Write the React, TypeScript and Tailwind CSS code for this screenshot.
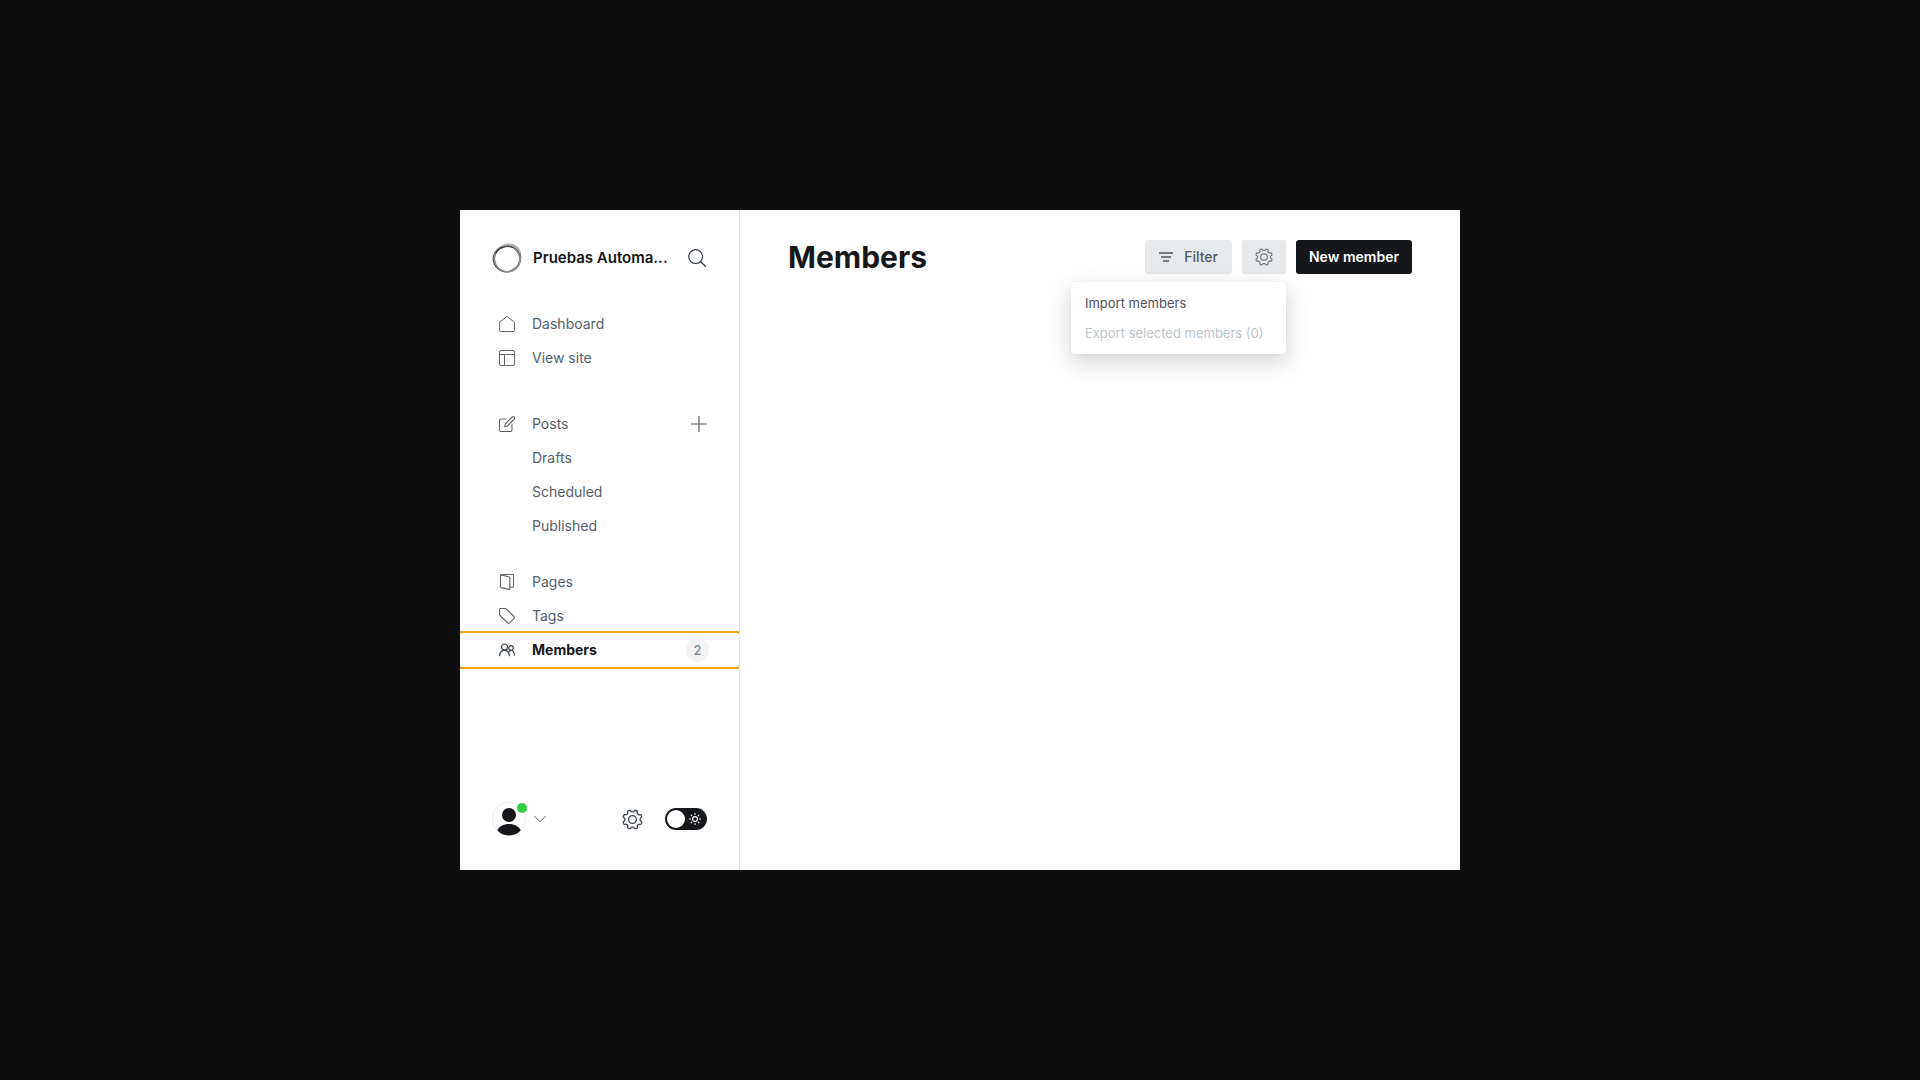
import type { ReactNode } from "react";

const stroke = {
  fill: "none",
  stroke: "currentColor",
  strokeLinecap: "round" as const,
  strokeLinejoin: "round" as const,
  "aria-hidden": true,
};

function HomeIcon() {
  return (
    <svg {...stroke} viewBox="0 0 16 16" className="size-4" strokeWidth="1">
      <path d="M.5 6.200 7.600.8a.7.7 0 0 1 .8 0l7.100 5.400v8.300a1 1 0 0 1-1 1h-13a1 1 0 0 1-1-1z" />
    </svg>
  );
}

function LayoutIcon() {
  return (
    <svg {...stroke} viewBox="0 0 16 16" className="size-4" strokeWidth="1">
      <rect x=".5" y=".5" width="15" height="15" rx="1.500" />
      <path d="M.5 4.500h15M5.500 4.500v11" />
    </svg>
  );
}

function ComposeIcon() {
  return (
    <svg {...stroke} viewBox="0 0 16 16" className="size-4" strokeWidth="1.100">
      <path d="M13 8.600v5.400a1.500 1.500 0 0 1-1.500 1.500H2A1.500 1.500 0 0 1 .5 14V4.500A1.500 1.500 0 0 1 2 3h5" />
      <path d="m8.300 10.100-2.600.6.600-2.700L13.200 1a1.400 1.400 0 0 1 2 2z" />
    </svg>
  );
}

function PagesIcon() {
  return (
    <svg {...stroke} viewBox="0 0 16 16" className="size-4" strokeWidth="1.100">
      <path d="M1.800.9 9.800 2.700a1.200 1.200 0 0 1 1 1.200v10.700a.8.8 0 0 1-1 .8L2.400 13.600a1.200 1.200 0 0 1-.9-1.200V1.500a1 1 0 0 1 1-1h11a1 1 0 0 1 1 1v10.800a1 1 0 0 1-1 1h-2.700" />
    </svg>
  );
}

function TagIcon() {
  return (
    <svg {...stroke} viewBox="0 0 16 16" className="size-4" strokeWidth="1.100">
      <path d="M.5 1.600A1.100 1.100 0 0 1 1.600.5h4.500a2 2 0 0 1 1.400.6l7.600 7.600a1.200 1.200 0 0 1 0 1.700l-4.700 4.700a1.200 1.200 0 0 1-1.700 0L1.100 7.500A2 2 0 0 1 .5 6.100z" />
    </svg>
  );
}

function MembersIcon() {
  return (
    <svg {...stroke} viewBox="0 0 16 16" className="size-4" strokeWidth="1.200">
      <circle cx="5.500" cy="5" r="3" />
      <circle cx="12" cy="6" r="2.300" />
      <path d="M.6 13.600C.8 10.500 2.600 8.300 5.500 8.300s4.600 2.200 4.900 5.300M10.200 9.300c.5-.5 1.100-.8 1.800-.8 2 0 3.200 1.800 3.400 4.600" />
    </svg>
  );
}

function SearchIcon() {
  return (
    <svg {...stroke} viewBox="0 0 18 18" className="size-[18px]" strokeWidth="1.200">
      <circle cx="7.600" cy="7.600" r="6.900" />
      <path d="m12.500 12.500 5 5" />
    </svg>
  );
}

function PlusIcon() {
  return (
    <svg {...stroke} viewBox="0 0 16 16" className="size-4" strokeWidth="1.200">
      <path d="M8 .2v15.600M.2 8h15.600" />
    </svg>
  );
}

const gearOutline = Array.from({ length: 160 }, (_, i) => {
  const angle = (i / 160) * Math.PI * 2;
  const radius = 9.9 - 1.35 * Math.tanh(1.6 * Math.cos(8 * angle));
  return `${(12 + radius * Math.cos(angle)).toFixed(2)},${(12 + radius * Math.sin(angle)).toFixed(2)}`;
}).join(" ");

function GearIcon({ className }: { className: string }) {
  return (
    <svg {...stroke} viewBox="0 0 24 24" className={className} strokeWidth="1.500">
      <circle cx="12" cy="12" r="4.400" />
      <polygon points={gearOutline} />
    </svg>
  );
}

function FilterIcon() {
  return (
    <svg {...stroke} viewBox="0 0 14 12" className="h-3 w-3.5" strokeWidth="1.500" strokeLinecap="butt">
      <path d="M0 2h14M2 6h10M4 10h6" />
    </svg>
  );
}

function ChevronIcon() {
  return (
    <svg {...stroke} viewBox="0 0 12 12" className="size-3" strokeWidth="1">
      <path d="m.7 3.400 5.300 5.300 5.300-5.300" />
    </svg>
  );
}

function SunIcon() {
  return (
    <svg {...stroke} viewBox="0 0 12 12" className="size-3" strokeWidth="1.100">
      <circle cx="6" cy="6" r="2.400" />
      <path d="M6 .5v1M6 10.500v1M.5 6h1M10.500 6h1M2.100 2.100l.7.7M9.200 9.200l.7.7M2.100 9.900l.7-.7M9.200 2.800l.7-.7" />
    </svg>
  );
}

function SiteLogo() {
  return (
    <svg viewBox="0 0 30 30" className="size-[30px] shrink-0" fill="none" aria-hidden="true">
      <ellipse cx="14.800" cy="15.800" rx="13.600" ry="13" stroke="#4c4f52" strokeWidth="1.300" />
      <ellipse cx="15.600" cy="15" rx="12.600" ry="14" stroke="#77797b" strokeWidth="1.200" transform="rotate(32 15.600 15)" />
      <ellipse cx="15" cy="15.800" rx="12.400" ry="13.200" stroke="#8b8d8f" strokeWidth="1.200" transform="rotate(-35 15 15.800)" />
      <path d="M10 3C17-.8 26.500 2 28.200 10" stroke="#b0b2b4" strokeWidth="1.500" />
      <path d="M28.300 13c.6 6-2.500 12-8.800 15" stroke="#8b8d8f" strokeWidth="2.200" />
      <path d="M3.500 10.500c3-6 11-8.500 18-6" stroke="#333537" strokeWidth="1.200" />
    </svg>
  );
}

function NavLink({ icon, label, active = false, badge }: { icon?: ReactNode; label: string; active?: boolean; badge?: string }) {
  return (
    <a
      href="#"
      aria-current={active ? "page" : undefined}
      className={
        active
          ? "flex h-[34px] flex-1 items-center gap-[17px] rounded-xs pr-[30px] pl-[39px] text-sm font-bold text-[#15171a] outline-2 outline-[#eda31c]"
          : "flex h-[34px] flex-1 items-center gap-[17px] pr-[30px] pl-[39px] text-sm text-[#54606b]"
      }
    >
      <span className={active ? "size-4 text-[#394047]" : "size-4 text-[#5d646b]"}>{icon}</span>
      <span className="flex-1">{label}</span>
      {badge && (
        <span className="flex h-6 min-w-[23px] items-center justify-center rounded-full bg-[#f1f3f4] px-1 text-[13px] font-medium text-[#7c8b9a]">
          {badge}
        </span>
      )}
    </a>
  );
}

function Sidebar() {
  return (
    <aside className="flex w-[280px] shrink-0 flex-col overflow-hidden border-r border-[#e1e4e7]">
      <div className="flex items-center pt-[33px] pr-[33px] pl-8">
        <SiteLogo />
        <span className="ml-[11px] text-[15px] font-semibold whitespace-nowrap text-[#15171a]">Pruebas Automa...</span>
        <button type="button" aria-label="Search site" className="ml-auto text-[#394047]">
          <SearchIcon />
        </button>
      </div>

      <nav className="mt-[34px]">
        <ul>
          <li className="flex"><NavLink icon={<HomeIcon />} label="Dashboard" /></li>
          <li className="flex"><NavLink icon={<LayoutIcon />} label="View site" /></li>
        </ul>
        <ul className="mt-8">
          <li className="flex items-center pr-8">
            <NavLink icon={<ComposeIcon />} label="Posts" />
            <button type="button" aria-label="New post" className="text-[#54595f]">
              <PlusIcon />
            </button>
          </li>
          <li className="flex"><NavLink label="Drafts" /></li>
          <li className="flex"><NavLink label="Scheduled" /></li>
          <li className="flex"><NavLink label="Published" /></li>
        </ul>
        <ul className="mt-[22px]">
          <li className="flex"><NavLink icon={<PagesIcon />} label="Pages" /></li>
          <li className="flex"><NavLink icon={<TagIcon />} label="Tags" /></li>
          <li className="flex"><NavLink icon={<MembersIcon />} label="Members" active badge="2" /></li>
        </ul>
      </nav>

      <div className="mt-auto flex items-center pr-8 pb-[34px] pl-8">
        <button type="button" aria-label="Account menu" className="flex items-center gap-2 text-[#54595f]">
          <span className="relative">
            <svg viewBox="0 0 34 34" className="size-[34px]" aria-hidden="true">
              <circle cx="17" cy="17" r="16.500" fill="#fff" stroke="#ececee" />
              <circle cx="17" cy="13" r="7" fill="#15171a" />
              <path d="M5.200 28.300C7 24.500 11.500 22 17 22s10 2.500 11.800 6.300C26 31.700 21.800 33.500 17 33.500S8 31.700 5.200 28.300z" fill="#15171a" />
            </svg>
            <span className="absolute top-px -right-px size-2.5 rounded-full bg-[#30cf43]" />
          </span>
          <ChevronIcon />
        </button>
        <a href="#" aria-label="Settings" className="ml-auto text-[#394047]">
          <GearIcon className="size-[21px]" />
        </a>
        <button
          type="button"
          role="switch"
          aria-checked="false"
          aria-label="Night shift"
          className="ml-[22px] flex h-[22px] w-[42px] items-center justify-between rounded-full bg-[#15171a] pr-1.5 pl-0.5 text-white"
        >
          <span className="size-[18px] rounded-full bg-white" />
          <SunIcon />
        </button>
      </div>
    </aside>
  );
}

export default function App() {
  return (
    <div className="flex min-h-screen items-center justify-center bg-[#0e0e0e] font-['Inter',sans-serif]">
      <div className="flex min-h-[660px] w-full max-w-[1000px] bg-white">
        <Sidebar />
        <main className="flex-1 px-12 pt-[30px]">
          <header className="flex items-center justify-between">
            <h1 className="text-3xl leading-[34px] font-bold text-[#15171a]">Members</h1>
            <div className="flex gap-2.5">
              <button type="button" className="flex h-[34px] items-center gap-[11px] rounded-[3px] bg-[#e6e9eb] px-3.5 text-sm font-medium text-[#54595f]">
                <FilterIcon />
                Filter
              </button>
              <div className="relative">
                <button type="button" aria-label="Members actions" aria-expanded="true" className="flex h-[34px] w-11 items-center justify-center rounded-[3px] bg-[#e6e9eb] text-[#6b7075]">
                  <GearIcon className="size-[18px]" />
                </button>
                <ul className="absolute top-full right-0 mt-2 w-[215px] rounded-[3px] bg-white pt-[7px] pb-[5px] text-[13px] shadow-[0_0_1px_rgba(0,0,0,0.2),0_8px_24px_rgba(0,0,0,0.18)]">
                  <li>
                    <button type="button" className="h-[30px] w-full px-3.5 text-left text-[#4b535c]">Import members</button>
                  </li>
                  <li>
                    <button type="button" disabled className="h-[30px] w-full px-3.5 text-left whitespace-nowrap text-[#bcc4ca]">Export selected members (0)</button>
                  </li>
                </ul>
              </div>
              <button type="button" className="h-[34px] rounded-[3px] bg-[#15171a] px-[13px] text-sm font-semibold text-white">New member</button>
            </div>
          </header>
        </main>
      </div>
    </div>
  );
}
